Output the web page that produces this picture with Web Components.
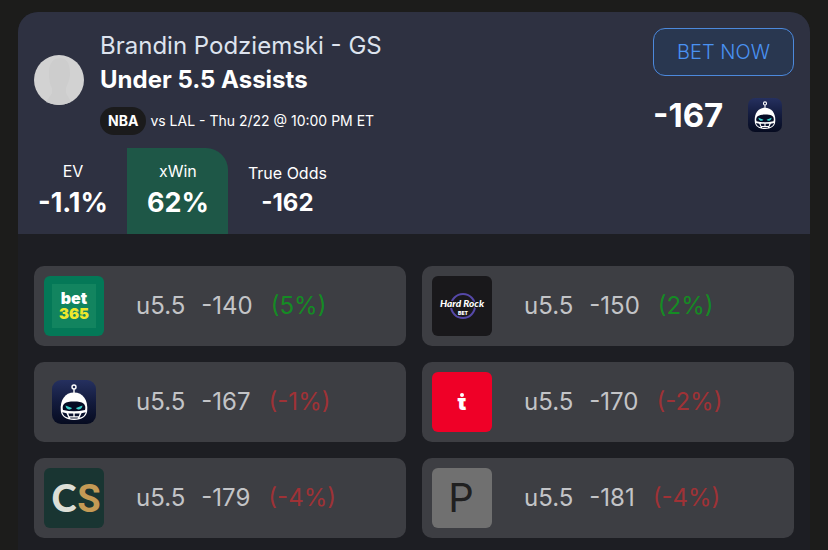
<!DOCTYPE html>
<html lang="en">
<head>
<meta charset="utf-8">
<meta name="viewport" content="width=device-width, initial-scale=1">
<title>Brandin Podziemski - Under 5.5 Assists</title>
<style>
	body {
		margin: 0;
		background: #1c1c1b;
		color: #fff;
		font-family: Inter, "Liberation Sans", sans-serif;
	}
</style>
</head>
<body>
<bet-card>
	<bet-header slot="header" player="Brandin Podziemski - GS" pick="Under 5.5 Assists" league="NBA" game="vs LAL - Thu 2/22 @ 10:00 PM ET" odds="-167">
		<bet-stat label="EV" value="-1.1%"></bet-stat>
		<bet-stat class="highlight" label="xWin" value="62%"></bet-stat>
		<bet-stat class="small" label="True Odds" value="-162"></bet-stat>
	</bet-header>
	<book-odds book="bet365" line="u5.5" odds="-140" edge="5"></book-odds>
	<book-odds book="hardrock" line="u5.5" odds="-150" edge="2"></book-odds>
	<book-odds book="robot" line="u5.5" odds="-167" edge="-1"></book-odds>
	<book-odds book="tipico" line="u5.5" odds="-170" edge="-2"></book-odds>
	<book-odds book="caesars" line="u5.5" odds="-179" edge="-4"></book-odds>
	<book-odds book="pinnacle" line="u5.5" odds="-181" edge="-4"></book-odds>
</bet-card>

<script>
const logos = {
	bet365: `
		<rect width="60" height="60" rx="6" fill="#047857"/>
		<rect x="8" y="8" width="44" height="44" fill="#12845f"/>
		<text x="30" y="28" text-anchor="middle" font-size="16" font-weight="900" fill="#fff">bet</text>
		<text x="30" y="43" text-anchor="middle" font-size="15" font-weight="900" fill="#eee82c">365</text>
	`,
	hardrock: `
		<rect width="60" height="60" rx="6" fill="#19181b"/>
		<circle cx="31" cy="30" r="12" fill="none" stroke="#5548a8" stroke-width="2"/>
		<text x="30" y="31" text-anchor="middle" font-family="Lato, sans-serif" font-size="10" font-weight="900" font-style="italic" fill="#fff" stroke="#19181b" stroke-width="2" paint-order="stroke">Hard Rock</text>
		<text x="31" y="39" text-anchor="middle" font-size="5" font-weight="900" fill="#fff" stroke="#19181b" stroke-width="2" paint-order="stroke">BET</text>
	`,
	robot: `
		<defs>
			<linearGradient id="night" x1="0" y1="0" x2="0" y2="1">
				<stop offset="0" stop-color="#25305f"/>
				<stop offset="0.5" stop-color="#131b3d"/>
				<stop offset="1" stop-color="#060b20"/>
			</linearGradient>
		</defs>
		<rect x="8" y="8" width="44" height="44" rx="9" fill="url(#night)"/>
		<path d="M30 17v5" stroke="#fff" stroke-width="1.4"/>
		<circle cx="30" cy="15" r="2" fill="none" stroke="#fff" stroke-width="1.4"/>
		<path d="M16.800 39C15.800 28 21 20.500 30 20.500S44.200 28 43.200 39C42.500 44.500 38 48 30 48S17.500 44.500 16.800 39z" fill="#fff"/>
		<path d="M19 38c-1.500-6 2-8.500 11-8.500s12.500 2.500 11 8.500q-11 2.500-22 0z" fill="#050b25"/>
		<path d="M21.500 33.500l6.500 2.500c-1.500 2.500-6 2-6.500-2.500zM38.500 33.500L32 36c1.500 2.500 6 2 6.500-2.500z" fill="#3cd0ca"/>
		<path d="M18.300 40.200l4.200 1 2 4.600q-5-1-6.200-5.600zM24.300 41.400h5v2.800h-4zM30.700 41.400h5l-1 2.800h-4zM37.500 41.200l4.200-1q-1.200 4.600-6.200 5.600zM26 45.400h8l-.5 1.200h-7z" fill="#09112d"/>
	`,
	tipico: `
		<rect width="60" height="60" rx="6" fill="#ef0027"/>
		<text x="30" y="38" text-anchor="middle" font-size="22" font-weight="900" fill="#fff">t</text>
		<path d="M23 18h14v8H23z" fill="#ef0027"/>
		<circle cx="30" cy="23" r="2" fill="#fff"/>
	`,
	caesars: `
		<rect width="60" height="60" rx="6" fill="#193532"/>
		<text x="20" y="44" text-anchor="middle" font-family="Lato, sans-serif" font-size="38" font-weight="900" fill="#dddfd7">C</text>
		<text x="45" y="44" text-anchor="middle" font-family="Roboto, sans-serif" font-size="38" font-weight="700" fill="#c49a55">S</text>
	`,
	pinnacle: `
		<rect width="60" height="60" rx="6" fill="#707070"/>
		<text x="29" y="44" text-anchor="middle" font-size="40" font-weight="400" fill="#202020">P</text>
	`
};

customElements.define("book-logo",
	class extends HTMLElement {
		connectedCallback(){
			this.attachShadow({ mode: "open" });
			// the small version drops the 8px frame around the robot
			const viewBox = this.hasAttribute("cropped") ? "8 8 44 44" : "0 0 60 60";
			this.shadowRoot.innerHTML = `
				<style>
					:host { display: block; flex: none; width: 60px; height: 60px; }
					svg { display: block; width: 100%; height: 100%; }
				</style>
				<svg viewBox="${viewBox}" aria-hidden="true">${logos[this.getAttribute("name")]}</svg>
			`;
		}
	}
);

customElements.define("bet-stat",
	class extends HTMLElement {
		connectedCallback(){
			this.attachShadow({ mode: "open" });
			this.shadowRoot.innerHTML = `
				<style>
					:host {
						display: flex;
						flex-direction: column;
						justify-content: center;
						gap: 4px;
						box-sizing: border-box;
						height: 86px;
						padding: 0 19px 0 20px;
						text-align: center;
					}
					:host(.highlight) { background: #1e5747; border-top-right-radius: 22px; }
					.label { font-size: 16px; line-height: 20px; }
					.value { font-size: 27px; line-height: 36px; font-weight: 700; }
					:host(.small) .value { font-size: 24px; line-height: 32px; }
				</style>
				<span class="label">${this.getAttribute("label")}</span>
				<span class="value">${this.getAttribute("value")}</span>
			`;
		}
	}
);

customElements.define("bet-header",
	class extends HTMLElement {
		connectedCallback(){
			this.attachShadow({ mode: "open" });
			this.shadowRoot.innerHTML = `
				<style>
					:host { display: block; background: #2e3141; }
					.top { display: flex; justify-content: space-between; height: 136px; padding: 0 16px; }
					.player { display: flex; align-items: center; gap: 16px; }
					.avatar { width: 50px; height: 50px; flex: none; }
					.info { padding-top: 4px; }
					h1, h2, p { margin: 0; }
					h1 { font-size: 24px; line-height: 34px; font-weight: 400; color: #dde3ee; }
					h2 { font-size: 24px; line-height: 34px; font-weight: 700; }
					.game { display: flex; align-items: center; gap: 4px; margin-top: 10px; font-size: 14px; line-height: 28px; }
					.league { padding: 0 8px; border-radius: 14px; background: #1b1b1c; font-weight: 700; }
					.action { display: flex; flex-direction: column; gap: 20px; padding-top: 16px; }
					button {
						width: 141px;
						height: 48px;
						padding: 0;
						border: 1px solid #4c89dc;
						border-radius: 12px;
						background: #293750;
						color: #4a92f2;
						font: 300 20px/24px Inter, "Liberation Sans", sans-serif;
					}
					.price { display: flex; align-items: center; gap: 25px; font-size: 33px; line-height: 38px; font-weight: 700; }
					.price book-logo { width: 34px; height: 34px; }
					.stats { display: flex; }
				</style>
				<div class="top">
					<div class="player">
						<svg class="avatar" viewBox="0 0 50 50" aria-hidden="true">
							<circle cx="25" cy="25" r="25" fill="#d2d2d2"/>
							<path d="M15 18C15 7 20 3 26 3s10 5 10 15c0 7-3 12-4 15v5l5 9q-12 6-25 0l6-9v-5c-2-3-3-8-3-15z" fill="#cdcdcd"/>
						</svg>
						<div class="info">
							<h1>${this.getAttribute("player")}</h1>
							<h2>${this.getAttribute("pick")}</h2>
							<p class="game"><span class="league">${this.getAttribute("league")}</span><span>${this.getAttribute("game")}</span></p>
						</div>
					</div>
					<div class="action">
						<button type="button">BET NOW</button>
						<div class="price"><span>${this.getAttribute("odds")}</span><book-logo name="robot" cropped></book-logo></div>
					</div>
				</div>
				<div class="stats"><slot></slot></div>
			`;
		}
	}
);

customElements.define("book-odds",
	class extends HTMLElement {
		connectedCallback(){
			const edge = Number(this.getAttribute("edge"));
			this.attachShadow({ mode: "open" });
			this.shadowRoot.innerHTML = `
				<style>
					:host {
						display: flex;
						align-items: center;
						gap: 16px;
						padding: 10px;
						border-radius: 10px;
						background: #3d3e43;
						color: #c3c4c7;
						font-size: 24px;
						line-height: 32px;
					}
					book-logo { margin-right: 16px; }
					.edge { margin-left: 2px; }
					.up { color: #158b24; }
					.down { color: #9f3236; }
				</style>
				<book-logo name="${this.getAttribute("book")}"></book-logo>
				<span>${this.getAttribute("line")}</span>
				<span>${this.getAttribute("odds")}</span>
				<span class="edge ${edge > 0 ? "up" : "down"}">(${edge}%)</span>
			`;
		}
	}
);

customElements.define("bet-card",
	class extends HTMLElement {
		connectedCallback(){
			this.attachShadow({ mode: "open" });
			this.shadowRoot.innerHTML = `
				<style>
					:host {
						display: block;
						margin: 12px 18px 0;
						overflow: hidden;
						border-radius: 20px 20px 0 0;
						background: #1d1e23;
					}
					.books {
						display: grid;
						grid-template-columns: 1fr 1fr;
						gap: 16px;
						padding: 32px 16px 12px;
					}
				</style>
				<slot name="header"></slot>
				<div class="books"><slot></slot></div>
			`;
		}
	}
);
</script>
</body>
</html>
